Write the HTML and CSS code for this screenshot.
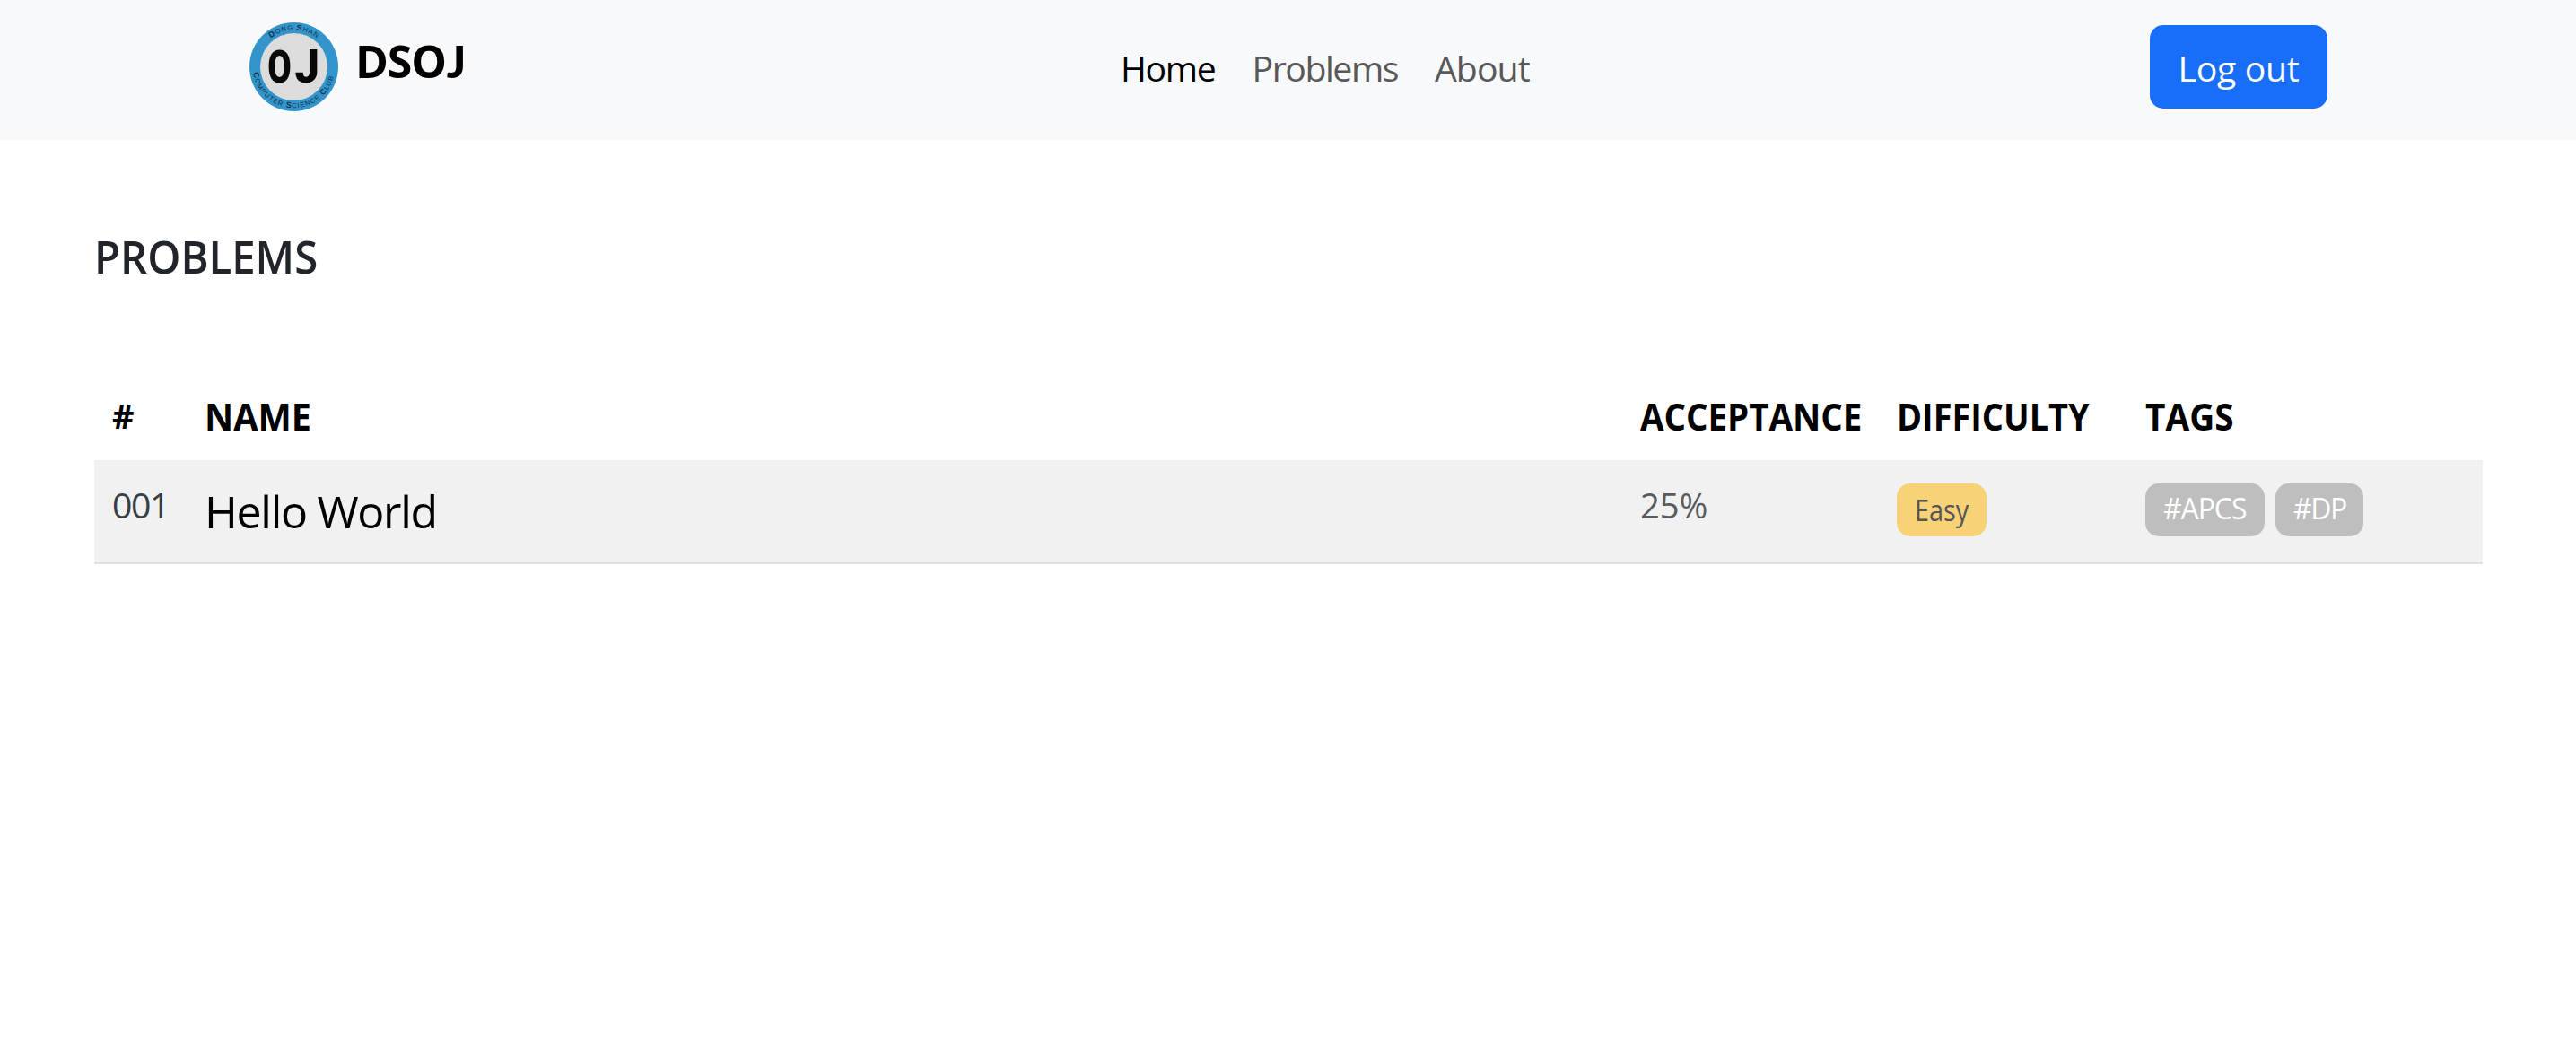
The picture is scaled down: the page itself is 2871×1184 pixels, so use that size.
FILE: index.html
```html
<!DOCTYPE html>
<html lang="en">
<head>
<meta charset="utf-8">
<title>DSOJ</title>
<link rel="stylesheet" href="styles.css">
</head>
<body>
<header class="navbar">
  <a class="brand">
    <svg class="logo" viewBox="0 0 99 99">
      <defs>
        <path id="arc-top" d="M8.5 49.5A41 41 0 0 1 90.5 49.5"/>
        <path id="arc-bottom" d="M3.7 49.5A45.8 45.8 0 0 0 95.3 49.5"/>
      </defs>
      <circle cx="49.5" cy="49.5" r="49.5" fill="#3394cb"/>
      <circle cx="49.5" cy="49.5" r="37.5" fill="#dcdcdc"/>
      <g class="ring">
        <text><textPath href="#arc-top" startOffset="36.5"><tspan class="cap">D</tspan>ONG <tspan class="cap">S</tspan>HAN</textPath></text>
        <text class="bottom"><textPath href="#arc-bottom" startOffset="6.5"><tspan class="cap">C</tspan>OMPUTER <tspan class="cap">S</tspan>CIENCE <tspan class="cap">C</tspan>LUB</textPath></text>
      </g>
      <g class="initials">
        <text x="19.6" y="67" textLength="28" lengthAdjust="spacingAndGlyphs">O</text>
        <text class="j" x="50.6" y="67" textLength="27.5" lengthAdjust="spacingAndGlyphs">J</text>
      </g>
    </svg>
    <span class="brand-name">DSO<span class="brand-j">J</span></span>
  </a>
  <nav class="links">
    <a class="link active">Home</a>
    <a class="link problems">Problems</a>
    <a class="link about">About</a>
  </nav>
  <button class="logout">Log out</button>
</header>
<main class="content">
  <h1 class="title"><span class="fit fit-title">PROBLEMS</span></h1>
  <section class="table">
    <div class="row head">
      <div class="hash">#</div>
      <div><span class="fit fit-name">NAME</span></div>
      <div><span class="fit fit-acceptance">ACCEPTANCE</span></div>
      <div><span class="fit fit-difficulty">DIFFICULTY</span></div>
      <div><span class="fit fit-tags">TAGS</span></div>
    </div>
    <div class="row item">
      <div class="number">001</div>
      <div class="name">Hello World</div>
      <div class="rate"><span class="fit fit-rate">25%</span></div>
      <div class="badges"><span class="badge easy"><span class="fit fit-easy">Easy</span></span></div>
      <div class="badges"><span class="badge tag apcs">#APCS</span><span class="badge tag dp">#DP</span></div>
    </div>
  </section>
</main>
</body>
</html>
```
FILE: styles.css
```css
* { box-sizing: border-box; }
body {
  margin: 0;
  background: #fff;
  color: #212529;
  font: 400 39.2px/60px "Open Sans", "Noto Sans", sans-serif;
}
.navbar {
  display: flex;
  align-items: flex-start;
  height: 156px;
  padding: 0 277px 0 278px;
  background: #f8f9fb;
}
.brand { display: flex; width: 971px; padding-top: 25px; color: #000; }
.logo { display: block; width: 99px; height: 99px; }
.ring { fill: #12354b; font: 400 7.6px "Liberation Sans", sans-serif; letter-spacing: .9px; }
.ring .bottom { letter-spacing: 1.05px; }
.ring .cap { font-size: 9px; font-weight: 700; }
.initials { fill: #080808; font: 700 50px "DejaVu Sans Mono", monospace; }
.initials .j { font: 900 51px "Roboto", sans-serif; }
.brand-name {
  margin: 13px 0 0 19px;
  font-weight: 700;
  font-size: 50px;
  letter-spacing: -1.2px;
}
.brand-j { font-family: "Lato", sans-serif; font-weight: 900; margin-left: 1px; }
.links { display: flex; flex: 1; gap: 41px; padding-top: 46px; }
.link { color: #585858; }
.active { color: #000; letter-spacing: -1.3px; }
.problems { letter-spacing: -1.45px; }
.about { letter-spacing: -.9px; }
.logout {
  width: 198px;
  height: 93px;
  margin-top: 28px;
  padding: 2px 0 0;
  border: 0;
  border-radius: 15px;
  background: #196ef9;
  color: #fff;
  font: inherit;
  letter-spacing: -.3px;
}
.content { padding: 100px 104px 0 105px; }
.title { margin: 0; font-size: 50px; line-height: 60px; font-weight: 560; }
.fit { display: inline-block; transform-origin: left center; }
.fit-title { transform: scaleX(.945); }
.fit-name { transform: scaleX(.965); }
.fit-acceptance { transform: scaleX(.938); }
.fit-difficulty { transform: scaleX(.925); }
.fit-tags { transform: scaleX(.945); }
.fit-rate { transform: scaleX(.975); }
.fit-easy { transform: scaleX(.9); }
.table { margin-top: 99px; }
.row { display: grid; grid-template-columns: 103px 1600px 286px 277px 1fr; }
.row > div { padding-left: 20px; white-space: nowrap; }
.head {
  height: 98px;
  line-height: 98px;
  color: #000;
  font-weight: 700;
  font-size: 41px;
}
.head .hash { font-size: 38px; line-height: 96px; }
.item { height: 116px; background: #f1f1f1; border-bottom: 2px solid #dee2e6; }
.item .number { padding-top: 20px; color: #373e44; letter-spacing: -1.4px; }
.item .name { padding-top: 27px; color: #000; font-size: 50px; letter-spacing: -1.3px; }
.item .rate { padding-top: 20px; color: #585b5e; }
.badges { display: flex; gap: 12px; padding-top: 26px; }
.badge { height: 59px; padding-left: 20px; border-radius: 15px; font-size: 32px; line-height: 59px; }
.easy { width: 100px; background: #f7d277; color: #555; }
.tag { background: #bebebe; color: #fff; line-height: 56px; }
.apcs { width: 133px; letter-spacing: -1.1px; }
.dp { width: 98px; letter-spacing: -1.5px; }
```
